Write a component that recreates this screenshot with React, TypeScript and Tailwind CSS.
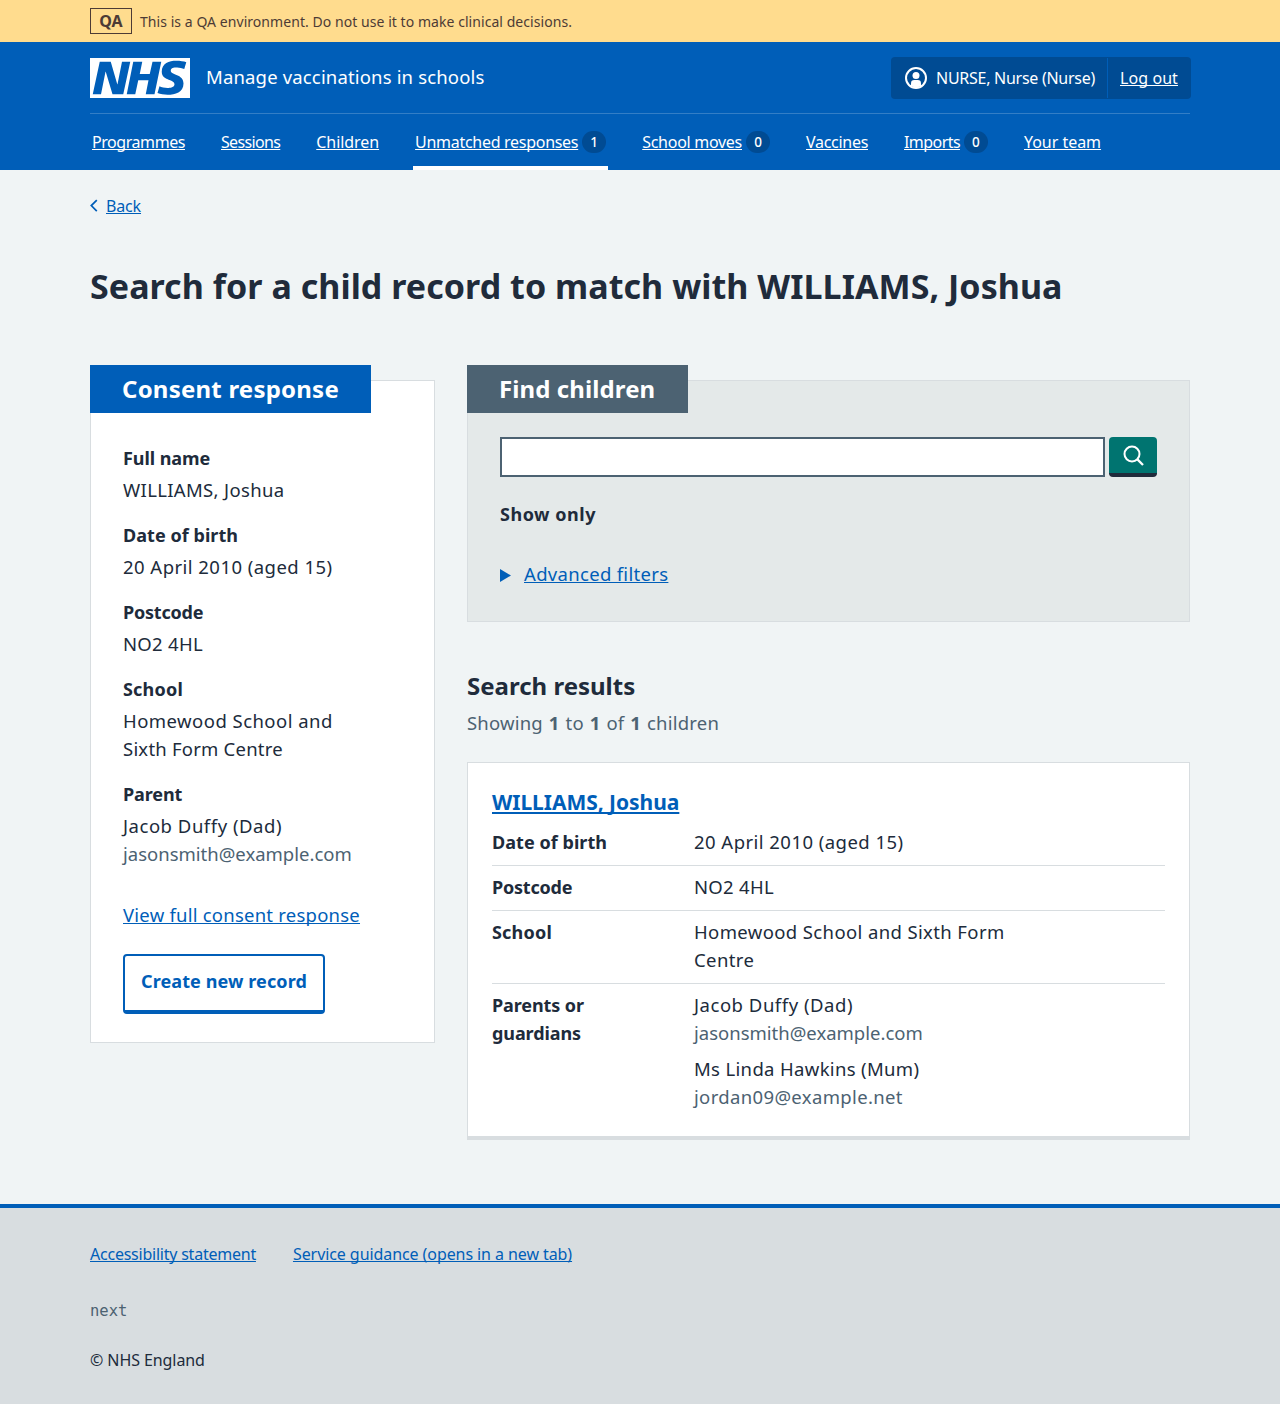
import type { ReactNode } from "react";

const link = "underline decoration-1 underline-offset-[1px] [text-decoration-skip-ink:none]";

function NavItem({ label, tracking, count, active }: { label: string; tracking: string; count?: number; active?: boolean }) {
  return (
    <li className={`flex h-14 items-center gap-1 px-[2px] pt-[4px] ${active ? "border-b-4 border-white" : "border-b-4 border-transparent"}`}>
      <a href="#" className={`${link} ${tracking} whitespace-nowrap leading-6`}>{label}</a>
      {count !== undefined && (
        <span className="mb-px flex h-[22px] w-6 items-center justify-center rounded-full bg-[#004b93] pt-[3px] text-[13.5px] font-medium leading-none">
          {count}
        </span>
      )}
    </li>
  );
}

function Entry({ label, tracking, children }: { label: string; tracking: string; children: ReactNode }) {
  return (
    <div className="mb-[17px]">
      <dt className={`mb-1 text-[18px] font-bold leading-7 ${tracking}`}>{label}</dt>
      <dd>{children}</dd>
    </div>
  );
}

function Row({ label, tracking, last, children }: { label: string; tracking: string; last?: boolean; children: ReactNode }) {
  return (
    <div className={`flex pt-[7px] ${last ? "" : "border-b border-[#d8dde0] pb-[9px]"}`}>
      <dt className={`mr-[52px] w-[150px] shrink-0 text-[18px] font-bold leading-7 ${tracking}`}>{label}</dt>
      <dd className="w-[332px]">{children}</dd>
    </div>
  );
}

export default function App() {
  return (
    <div className="min-h-[1404px] bg-[#f0f4f5] font-['Noto_Sans',sans-serif] text-[18.5px] leading-7 text-[#202b3b]">
      <div className="h-[42px] bg-[#ffdc8e] text-[#4d3b35]">
        <div className="mx-auto flex h-full w-[1100px] items-center gap-2">
          <strong className="flex h-[26px] w-[42px] items-center justify-center border border-[#4d3b35] text-base leading-6">QA</strong>
          <span className="pt-px text-[14px] leading-6 tracking-[0.055px]">This is a QA environment. Do not use it to make clinical decisions.</span>
        </div>
      </div>

      <header className="h-32 bg-[#005eb8] text-white">
        <div className="mx-auto w-[1100px]">
          <div className="flex h-[72px] items-center border-b border-[#337ec6] pt-px">
            <svg aria-label="NHS" className="h-10 w-[100px]" viewBox="0 0 200 80">
              <path
                fill="currentColor"
                d="M200 0v80H0V0h200Zm-27.5 5.5c-14.5 0-29 5-29 22 0 10.2 7.7 13.5 14.7 16.3l.7.3c5.4 2 10.1 3.9 10.1 8.4 0 6.5-8.5 7.5-14 7.5s-12.5-1.5-16-3.5L135 70c5.5 2 13.5 3.5 20 3.5 15.5 0 32-4.5 32-22.5 0-19.5-25.5-16.5-25.5-25.5 0-5.5 5.5-6.5 12.5-6.5a35 35 0 0 1 14.5 3l4-13.5c-4.5-2-12-3-20-3Zm-131 2h-22l-14 65H22l9-45h.5l13.5 45h21.5l14-65H64l-9 45h-.5l-13-45Zm63 0h-18l-13 65h17l6-28H117l-5.5 28H129l13.5-65H125L119.5 32h-20l5-24.5Z"
              />
            </svg>
            <span className="ml-4 pb-[2px] tracking-[0.16px]">Manage vaccinations in schools</span>
            <div className="-mr-px ml-auto flex h-[42px] w-[300px] items-center rounded bg-[#004b93] text-base leading-6">
              <svg className="ml-[14px] size-[22px]" viewBox="0 0 22 22" fill="none">
                <circle cx="11" cy="11" r="10" stroke="white" strokeWidth="2" />
                <circle cx="11" cy="8.4" r="3.5" fill="white" />
                <path d="M6 19v-2.600a3.300 3.300 0 0 1 3.300-3.300h3.400a3.300 3.300 0 0 1 3.300 3.300V19a10 10 0 0 1-10 0Z" fill="white" />
              </svg>
              <span className="ml-[9px] w-[171px] whitespace-nowrap tracking-[-0.27px]">NURSE, Nurse (Nurse)</span>
              <div className="flex h-10 items-center border-l border-[#005eb8] pl-3">
                <a href="#" className={`${link} whitespace-nowrap tracking-[0.08px]`}>Log out</a>
              </div>
            </div>
          </div>
          <ul className="flex gap-8 text-base">
            <NavItem label="Programmes" tracking="tracking-[-0.44px]" />
            <NavItem label="Sessions" tracking="tracking-[-0.65px]" />
            <NavItem label="Children" tracking="tracking-[-0.06px]" />
            <NavItem label="Unmatched responses" tracking="tracking-[-0.29px]" count={1} active />
            <NavItem label="School moves" tracking="tracking-[-0.28px]" count={0} />
            <NavItem label="Vaccines" tracking="tracking-[-0.29px]" />
            <NavItem label="Imports" tracking="tracking-[-0.57px]" count={0} />
            <NavItem label="Your team" tracking="tracking-[-0.03px]" />
          </ul>
        </div>
      </header>

      <div className="mx-auto h-[1034px] w-[1100px] pt-6">
        <a href="#" className="flex items-center text-base leading-6 text-[#005eb8]">
          <svg className="mr-2 h-[14px] w-2" viewBox="0 0 8 14" fill="none" stroke="currentColor" strokeWidth="1.700">
            <path d="M6.800 1.200 1.300 6.600l5.500 5.600" />
          </svg>
          <span className={`${link} tracking-[-0.15px]`}>Back</span>
        </a>
        <h1 className="mt-[46px] whitespace-nowrap text-[34px] font-bold leading-[44px] tracking-[0.05px]">
          Search for a child record to match with WILLIAMS, Joshua
        </h1>

        <div className="mt-[72px] flex items-start gap-8">
          <section className="h-[663px] w-[345px] border border-[#d8dde0] bg-white px-8">
            <h2 className="-ml-[33px] -mt-4 h-12 w-[281px] bg-[#005eb8] pl-8 pt-2 text-[24px] font-bold leading-8 tracking-[0.22px] text-white">
              Consent response
            </h2>
            <dl className="mt-[31px]">
              <Entry label="Full name" tracking="tracking-[-0.06px]"><span className="tracking-[0.34px]">WILLIAMS, Joshua</span></Entry>
              <Entry label="Date of birth" tracking="tracking-[0.05px]"><span className="tracking-[0.46px]">20 April 2010 (aged 15)</span></Entry>
              <Entry label="Postcode" tracking="tracking-[-0.2px]"><span className="tracking-[0.3px]">NO2 4HL</span></Entry>
              <Entry label="School" tracking="tracking-[0.2px]">
                <span className="tracking-[0.46px]">Homewood School and</span><br />
                <span className="tracking-[0.22px]">Sixth Form Centre</span>
              </Entry>
              <Entry label="Parent" tracking="tracking-[-0.1px]">
                <span className="tracking-[0.53px]">Jacob Duffy (Dad)</span><br />
                <span className="text-[#4c6272]">jasonsmith@example.com</span>
              </Entry>
            </dl>
            <a href="#" className={`${link} mt-[33px] block tracking-[0.23px] text-[#005eb8]`}>View full consent response</a>
            <button className="mt-[25px] flex h-[60px] w-[202px] justify-center rounded border-2 border-b-4 border-[#005eb8] pt-[11px] text-[18px] font-bold leading-7 tracking-[0.1px] text-[#005eb8]">
              Create new record
            </button>
          </section>

          <div className="w-[723px]">
            <section className="h-[242px] border border-[#d8dde0] bg-[#e4e9e9] px-8">
              <h2 className="-ml-[33px] -mt-4 h-12 w-[221px] bg-[#4c6272] pl-8 pt-2 text-[24px] font-bold leading-8 tracking-[0.1px] text-white">
                Find children
              </h2>
              <div className="mt-6 flex gap-1">
                <input aria-label="Search" className="h-10 w-[605px] border-2 border-[#4c6272] bg-white px-2" />
                <button aria-label="Find" className="flex h-10 w-12 justify-center rounded border-b-4 border-[#202b3b] bg-[#007470] pl-[2px] pt-2 text-white">
                  <svg className="size-[22px]" viewBox="0 0 22 22" fill="none" stroke="currentColor" strokeWidth="2">
                    <circle cx="9" cy="9" r="7.500" />
                    <path d="m14.400 14.400 5.600 5.600" strokeWidth="2.300" />
                  </svg>
                </button>
              </div>
              <p className="mt-[23px] text-[18px] font-bold leading-7 tracking-[0.53px]">Show only</p>
              <div className="mt-8 flex items-center text-[#005eb8]">
                <svg className="mr-[13px] mt-[2px] h-[13px] w-[11px]" viewBox="0 0 11 13" fill="currentColor"><path d="M0 0l11 6.500L0 13Z" /></svg>
                <span className={`${link} tracking-[0.31px]`}>Advanced filters</span>
              </div>
            </section>

            <h2 className="mt-[48px] text-[24px] font-bold leading-8">Search results</h2>
            <p className="mt-[7px] tracking-[0.2px] [word-spacing:0.9px] text-[#4c6272]">
              Showing <b className="font-bold">1</b> to <b className="font-bold">1</b> of <b className="font-bold">1</b> children
            </p>

            <article className="mt-[25px] h-[378px] border border-b-4 border-[#d8dde0] bg-white px-6 pt-[23px]">
              <h3 className="text-[21px] font-bold leading-8 tracking-[-0.04px] text-[#005eb8]">
                <a href="#" className="underline decoration-2 underline-offset-[2px] [text-decoration-skip-ink:none]">WILLIAMS, Joshua</a>
              </h3>
              <dl className="mt-[3px]">
                <Row label="Date of birth" tracking="tracking-[0.05px]"><span className="tracking-[0.46px]">20 April 2010 (aged 15)</span></Row>
                <Row label="Postcode" tracking="tracking-[-0.2px]"><span className="tracking-[0.3px]">NO2 4HL</span></Row>
                <Row label="School" tracking="tracking-[0.2px]"><span className="tracking-[0.38px]">Homewood School and Sixth Form Centre</span></Row>
                <Row label="Parents or guardians" tracking="tracking-[-0.1px]" last>
                  <p><span className="tracking-[0.53px]">Jacob Duffy (Dad)</span><br /><span className="text-[#4c6272]">jasonsmith@example.com</span></p>
                  <p className="mt-2"><span className="tracking-[0.34px]">Ms Linda Hawkins (Mum)</span><br /><span className="tracking-[0.35px] text-[#4c6272]">jordan09@example.net</span></p>
                </Row>
              </dl>
            </article>
          </div>
        </div>
      </div>

      <footer className="h-[200px] border-t-4 border-[#005eb8] bg-[#d8dde0] text-base leading-6">
        <div className="mx-auto w-[1100px] pt-[34px]">
          <div className="flex gap-[37px] text-[#005eb8]">
            <a href="#" className={`${link} tracking-[-0.23px]`}>Accessibility statement</a>
            <a href="#" className={`${link} tracking-[-0.08px]`}>Service guidance (opens in a new tab)</a>
          </div>
          <p className="mt-[33px] font-['DejaVu_Sans_Mono',monospace] text-[15.5px] text-[#4c6272]">next</p>
          <p className="mt-[25px] tracking-[-0.08px]">© NHS England</p>
        </div>
      </footer>
    </div>
  );
}
